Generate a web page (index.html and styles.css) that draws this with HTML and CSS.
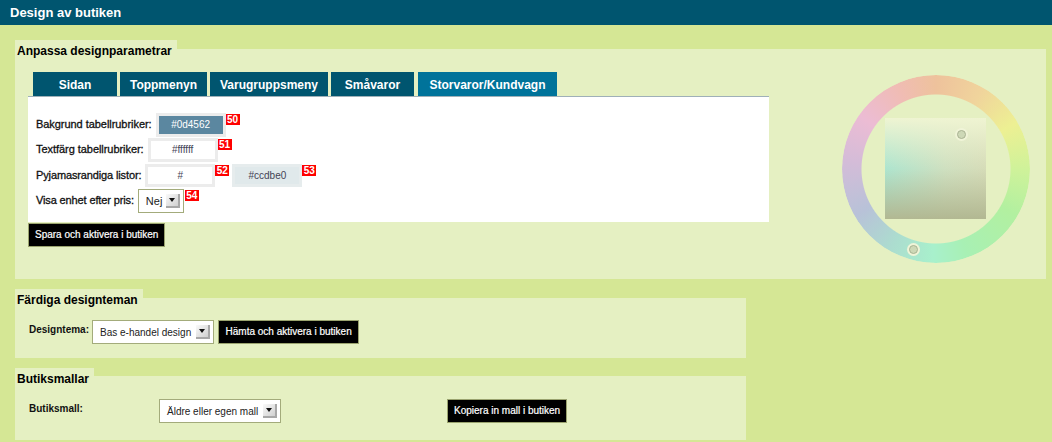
FILE: index.html
```html
<!DOCTYPE html>
<html>
<head>
    <title>Design av butiken</title>
    <link rel="stylesheet" href="styles.css">
</head>
<body>
    <div class="page-title">Design av butiken</div>
    <div class="content">
        <div class="legend">Anpassa designparametrar</div>
        <div class="panel panel-params">
            <div class="params">
                <div class="tabs">
                    <span class="tab tab-sidan">Sidan</span>
                    <span class="tab tab-topp">Toppmenyn</span>
                    <span class="tab tab-varu">Varugruppsmeny</span>
                    <span class="tab tab-sma">Småvaror</span>
                    <span class="tab tab-stor active">Storvaror/Kundvagn</span>
                </div>
                <div class="form-area">
                    <div class="row">
                        <span class="label">Bakgrund tabellrubriker:</span>
                        <span class="field field-dark">#0d4562</span>
                        <span class="badge">50</span>
                    </div>
                    <div class="row">
                        <span class="label">Textfärg tabellrubriker:</span>
                        <span class="field">#ffffff</span>
                        <span class="badge">51</span>
                    </div>
                    <div class="row">
                        <span class="label label-tight">Pyjamasrandiga listor:</span>
                        <span class="field">#</span>
                        <span class="badge">52</span>
                        <span class="field field-pale">#ccdbe0</span>
                        <span class="badge">53</span>
                    </div>
                    <div class="row">
                        <span class="label label-tight">Visa enhet efter pris:</span>
                        <span class="select select-small">Nej<span class="arrow"></span></span>
                        <span class="badge">54</span>
                    </div>
                </div>
                <span class="btn btn-save">Spara och aktivera i butiken</span>
            </div>
            <div class="wheel">
                <div class="square"><span class="handle handle-sv"></span></div>
                <span class="handle handle-hue"></span>
            </div>
        </div>

        <div class="legend legend-themes">Färdiga designteman</div>
        <div class="panel panel-themes">
            <span class="label-strong">Designtema:</span>
            <span class="select">Bas e-handel design<span class="arrow"></span></span>
            <span class="btn">Hämta och aktivera i butiken</span>
        </div>

        <div class="legend legend-templates">Butiksmallar</div>
        <div class="panel panel-templates">
            <span class="label-strong label-fixed">Butiksmall:</span>
            <span class="select">Äldre eller egen mall<span class="arrow"></span></span>
            <span class="btn btn-copy">Kopiera in mall i butiken</span>
        </div>
    </div>
</body>
</html>
```

FILE: styles.css
```css
body {
    margin: 0;
    background: #d5e795;
    font-family: "Liberation Sans", Arial, sans-serif;
    font-size: 11px;
    color: #111;
    overflow: hidden;
}
.page-title {
    height: 25px;
    line-height: 25px;
    padding-left: 10px;
    background: #00556f;
    color: #fff;
    font-size: 13px;
    font-weight: bold;
}
.content { padding: 15px 6px 0 15px; }
.legend {
    width: fit-content;
    height: 9px;
    line-height: 22px;
    padding: 0 5px 0 2px;
    background: #e5f0c2;
    font-size: 12px;
    font-weight: bold;
    color: #000;
    position: relative;
}
.legend-themes { margin-top: 10px; }
.legend-templates { margin-top: 10px; height: 8px; }
.panel { background: #e5f0c2; }

.panel-params {
    display: flex;
    height: 230px;
    padding: 23px 0 0 13px;
    box-sizing: border-box;
}
.params { width: 741px; }
.tabs {
    display: flex;
    gap: 3px;
    padding-left: 5px;
    height: 24px;
}
.tab {
    background: #00556f;
    color: #fff;
    font-size: 12px;
    font-weight: bold;
    line-height: 26px;
    text-align: center;
}
.tab-sidan { width: 84px; }
.tab-topp { width: 87px; }
.tab-varu { width: 118px; }
.tab-sma { width: 83px; }
.tab-stor { width: 139px; margin-left: 1px; }
.tab.active { background: #00739a; }
.form-area {
    height: 126px;
    padding: 16px 0 0 8px;
    box-sizing: border-box;
    background: #fff;
    border-top: 1px solid #9fb0b8;
}
.row {
    display: flex;
    align-items: flex-start;
    height: 25.4px;
}
.label {
    margin-right: 4px;
    line-height: 23px;
    letter-spacing: -0.05px;
    color: #111;
    -webkit-text-stroke: 0.3px #111;
}
.label-tight { letter-spacing: -0.13px; }
.field {
    width: 70px;
    height: 23.5px;
    line-height: 17px;
    box-sizing: border-box;
    border: 3px solid #ececec;
    background: #fff;
    color: #445;
    text-align: center;
    font-size: 10px;
}
.field-dark { background: #5b87a0; color: #fff; }
.field-pale { background: #e0e9eb; border-color: #e6eced; margin-left: 3px; }
.badge {
    width: 14px;
    height: 11px;
    margin-top: 1px;
    line-height: 11px;
    background: #ff0000;
    color: #fff;
    font-size: 10px;
    font-weight: bold;
    text-align: center;
}
.select {
    display: inline-flex;
    align-items: center;
    justify-content: space-between;
    width: 122px;
    height: 24px;
    padding: 0 3px 0 7px;
    box-sizing: border-box;
    border: 1px solid #a3ab7b;
    background: #fff;
    color: #222;
    font-size: 10px;
    white-space: nowrap;
}
.select-small { width: 46px; margin-right: 1px; font-size: 11px; }
.arrow {
    position: relative;
    flex: none;
    width: 14px;
    height: 14px;
    box-sizing: border-box;
    background: linear-gradient(135deg, #fafafa, #d0d0d0);
    border-right: 2px solid #a8a8a8;
    border-bottom: 2px solid #a8a8a8;
}
.arrow::after {
    content: "";
    position: absolute;
    left: 3px;
    top: 4px;
    border-style: solid;
    border-width: 4px 3.5px 0;
    border-color: #111 transparent transparent;
}
.btn {
    display: inline-block;
    height: 24px;
    line-height: 22px;
    padding: 0 6px;
    box-sizing: border-box;
    background: #000;
    border: 1px solid #9aa36e;
    color: #fff;
    font-size: 10px;
    white-space: nowrap;
    -webkit-text-stroke: 0.2px #fff;
}
.btn-save { margin-top: 1px; }

.wheel {
    position: relative;
    display: flex;
    align-items: center;
    justify-content: center;
    width: 188px;
    height: 188px;
    margin: 3px 0 0 73px;
}
.wheel::before {
    content: "";
    position: absolute;
    inset: 0;
    border-radius: 50%;
    background: conic-gradient(#eec29c 0deg, #f0d49c 30deg, #edf093 60deg, #cff29a 90deg, #b2f0a0 120deg, #a8f0b4 160deg, #a8f0cc 182deg, #acdccf 210deg, #b8c2d8 240deg, #d4bcd8 275deg, #ecbcd4 305deg, #f0bcb4 335deg, #eec29c 360deg);
    -webkit-mask: radial-gradient(circle, transparent 74px, #000 75px);
    mask: radial-gradient(circle, transparent 74px, #000 75px);
}
.square {
    position: relative;
    width: 101px;
    height: 101px;
    margin: -1px 0 0 -1px;
    background:
        linear-gradient(to bottom, #eff4d2 0%, rgba(239, 244, 210, 0) 50%, rgba(178, 184, 146, 0) 50%, #b2b892 100%),
        linear-gradient(to right, #aee5cf 0%, #cfe0c0 60%, #d6dcb8 100%);
}
.handle {
    position: absolute;
    width: 9px;
    height: 9px;
    box-sizing: border-box;
    border: 1px solid #a9b393;
    border-radius: 50%;
    background: #cdd8b6;
    box-shadow: 0 0 0 2px #f0f4d8;
}
.handle-sv { left: 72px; top: 12px; }
.handle-hue { left: 67px; top: 170px; }

.panel-themes {
    display: flex;
    align-items: flex-start;
    height: 60px;
    padding: 22px 0 0 14px;
    width: 731px;
    box-sizing: border-box;
}
.panel-templates {
    display: flex;
    align-items: flex-start;
    height: 64px;
    padding: 23px 0 0 14px;
    width: 731px;
    box-sizing: border-box;
}
.label-strong {
    font-size: 10px;
    font-weight: bold;
    color: #111;
    line-height: 19px;
    margin-right: 3px;
}
.panel-themes .btn { margin-left: 4px; padding: 0 6.5px; }
.label-fixed { width: 125px; margin-right: 5px; }
.btn-copy { margin-left: 166px; }
```
